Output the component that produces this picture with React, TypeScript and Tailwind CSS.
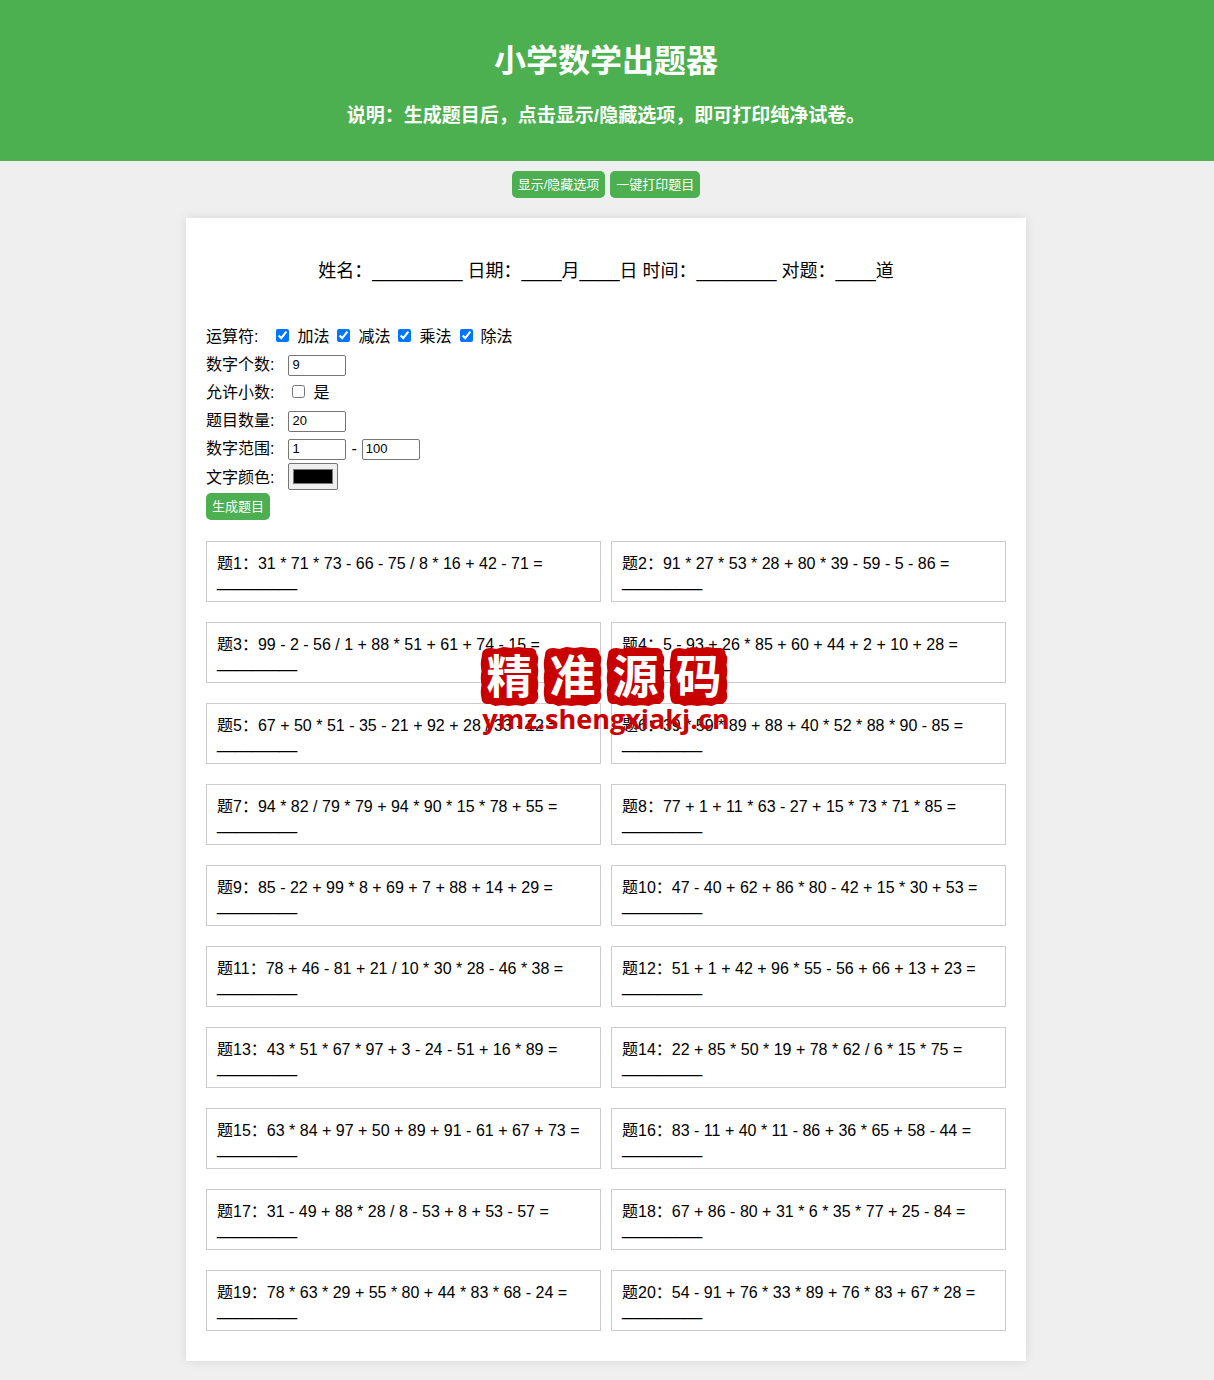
import * as React from 'react'

const OPERATORS = ['加法', '减法', '乘法', '除法']

const QUESTIONS = [
  '31 * 71 * 73 - 66 - 75 / 8 * 16 + 42 - 71',
  '91 * 27 * 53 * 28 + 80 * 39 - 59 - 5 - 86',
  '99 - 2 - 56 / 1 + 88 * 51 + 61 + 74 - 15',
  '5 - 93 + 26 * 85 + 60 + 44 + 2 + 10 + 28',
  '67 + 50 * 51 - 35 - 21 + 92 + 28 / 33 - 12',
  '39 * 59 * 89 + 88 + 40 * 52 * 88 * 90 - 85',
  '94 * 82 / 79 * 79 + 94 * 90 * 15 * 78 + 55',
  '77 + 1 + 11 * 63 - 27 + 15 * 73 * 71 * 85',
  '85 - 22 + 99 * 8 + 69 + 7 + 88 + 14 + 29',
  '47 - 40 + 62 + 86 * 80 - 42 + 15 * 30 + 53',
  '78 + 46 - 81 + 21 / 10 * 30 * 28 - 46 * 38',
  '51 + 1 + 42 + 96 * 55 - 56 + 66 + 13 + 23',
  '43 * 51 * 67 * 97 + 3 - 24 - 51 + 16 * 89',
  '22 + 85 * 50 * 19 + 78 * 62 / 6 * 15 * 75',
  '63 * 84 + 97 + 50 + 89 + 91 - 61 + 67 + 73',
  '83 - 11 + 40 * 11 - 86 + 36 * 65 + 58 - 44',
  '31 - 49 + 88 * 28 / 8 - 53 + 8 + 53 - 57',
  '67 + 86 - 80 + 31 * 6 * 35 * 77 + 25 - 84',
  '78 * 63 * 29 + 55 * 80 + 44 * 83 * 68 - 24',
  '54 - 91 + 76 * 33 * 89 + 76 * 83 + 67 * 28',
]

const BUTTON = 'h-[27px] rounded-[5px] bg-[#4caf50] px-1.5 text-[13px] leading-5 text-white cursor-pointer'
const LABEL = 'mr-[14px]'
const NUMBER = 'h-[21px] w-[58px] rounded-[2px] border border-[#767676] bg-white px-[3px] text-[13px]'
const CHECKBOX = 'mb-1 size-[13px] accent-[#0075ff]'

const Seal: React.FC<{ char: string }> = ({ char }) => (
  <svg viewBox="0 0 58 60" className="h-[60px] w-[58px]">
    <path
      fill="#c80000"
      d="M3 5Q5 2 10 2L16 3L23 1L31 2L38 1L45 2L51 2Q55 3 55 7L57 11L56 18L57 24L56 31L57 38L56 44L57 50Q56 54 53 56L47 56L42 58L35 57L28 58L21 57L15 58L10 56L6 56Q2 55 2 51L1 45L2 38L1 31L2 24L1 17L2 11Z"
      stroke="#c80000"
      strokeWidth="2"
      strokeLinejoin="round"
    />
    <text x="29" y="46" textAnchor="middle" fill="#fff" fontSize="46" fontWeight="700">{char}</text>
  </svg>
)

const Watermark: React.FC = () => (
  <div className="pointer-events-none absolute top-[429px] left-1/2 flex -translate-x-1/2 flex-col items-center text-[#c80000]">
    <div className="flex gap-[5px] pr-1">
      {['精', '准', '源', '码'].map((char) => <Seal key={char} char={char} />)}
    </div>
    <span className="font-['Open_Sans','Noto_Sans',sans-serif] text-[27px] leading-6 font-bold">ymz.shengxiakj.cn</span>
  </div>
)

export default function App() {
  const [showOptions, setShowOptions] = React.useState(true)

  return (
    <div className="min-h-screen bg-[#efefef] pb-5 font-['Liberation_Sans','Noto_Sans_CJK_SC',sans-serif] text-base text-black">
      <header className="bg-[#4caf50] pt-10 pr-0.5 pb-8 text-center font-bold text-white">
        <h1 className="text-[32px] leading-[42px]">小学数学出题器</h1>
        <h3 className="mt-5 text-[19px] leading-[27px]">说明：生成题目后，点击显示/隐藏选项，即可打印纯净试卷。</h3>
      </header>

      <div className="flex justify-center gap-[5px] py-2.5 pr-0.5">
        <button type="button" className={BUTTON} onClick={() => setShowOptions(!showOptions)}>显示/隐藏选项</button>
        <button type="button" className={BUTTON} onClick={() => window.print()}>一键打印题目</button>
      </div>

      <div className="mt-2.5 pr-0.5">
        <main className="relative mx-auto max-w-[840px] bg-white px-5 pt-10 pb-[30px] shadow-[0_0_10px_rgba(0,0,0,0.1)]">
          <p className="text-center text-[18px] leading-[27px]">
            姓名：_________ 日期：____月____日 时间：________ 对题：____道
          </p>

          {showOptions && (
            <form className="mt-[38px] leading-7" onSubmit={(e) => e.preventDefault()}>
              <div className="flex h-7 items-center">
                <span className="mr-[18px]">运算符:</span>
                <div className="flex gap-2">
                  {OPERATORS.map((name) => (
                    <label key={name} className="flex items-center gap-2">
                      <input type="checkbox" defaultChecked className={CHECKBOX} />
                      {name}
                    </label>
                  ))}
                </div>
              </div>
              <div className="flex h-7 items-center">
                <label htmlFor="operands" className={LABEL}>数字个数:</label>
                <input id="operands" type="number" defaultValue={9} className={NUMBER} />
              </div>
              <div className="flex h-7 items-center">
                <span className={LABEL}>允许小数:</span>
                <label className="ml-1 flex items-center gap-2">
                  <input type="checkbox" className={CHECKBOX} />
                  是
                </label>
              </div>
              <div className="flex h-7 items-center">
                <label htmlFor="count" className={LABEL}>题目数量:</label>
                <input id="count" type="number" defaultValue={20} className={NUMBER} />
              </div>
              <div className="flex h-7 items-center">
                <label htmlFor="min" className={LABEL}>数字范围:</label>
                <input id="min" type="number" defaultValue={1} className={NUMBER} />
                <span className="mx-[5px]">-</span>
                <input type="number" aria-label="最大值" defaultValue={100} className={NUMBER} />
              </div>
              <div className="flex h-[30px] items-start leading-[30px]">
                <label htmlFor="color" className={LABEL}>文字颜色:</label>
                <input id="color" type="color" defaultValue="#000000" className="h-[27px] w-[50px] rounded-[2px] border border-[#767676] bg-[#efefef] px-0.5 py-px" />
              </div>
              <button type="submit" className={`${BUTTON} block`}>生成题目</button>
            </form>
          )}

          <ol className="mt-[21px] grid grid-cols-2 gap-x-2.5 gap-y-5">
            {QUESTIONS.map((question, i) => (
              <li key={question} className="border border-[#ccc] px-2.5 pt-[13px] pb-2.5 leading-[18px]">
                题{i + 1}：{question} =
                <br />
                _________
              </li>
            ))}
          </ol>

          <Watermark />
        </main>
      </div>
    </div>
  )
}
